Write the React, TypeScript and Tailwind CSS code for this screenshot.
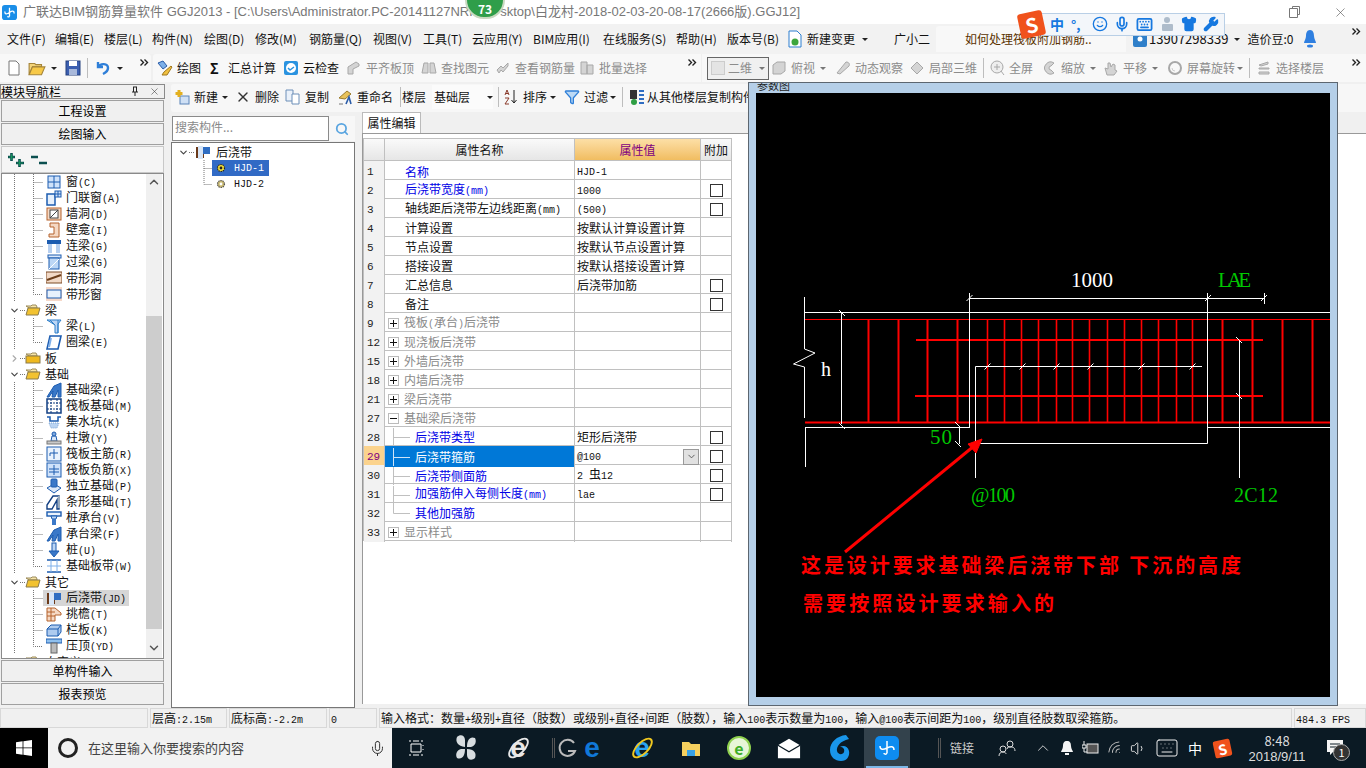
import type { ReactNode } from "react";
import { ChevronDown, ChevronRight, ChevronUp, Filter, Keyboard, Mic, Search, Shirt, Smile, Volume1, Wifi, Wrench, X } from "lucide-react";

// ascii in the grid/tree is half width (SimSun style), so it gets its own smaller mono span
const Sim = ({ text }: { text: string }) => (
  <span className="whitespace-pre">
    {text.split(/([\x20-\x7e]+)/).map((part, i) =>
      /^[\x20-\x7e]+$/.test(part) ? (
        <span key={i} className="font-['Liberation_Mono',monospace] text-[10px]">
          {part}
        </span>
      ) : (
        <span key={i}>{part}</span>
      ),
    )}
  </span>
);

const Ico = ({ children, size = 16, className = "" }: { children: ReactNode; size?: number; className?: string }) => (
  <svg width={size} height={size} viewBox="0 0 16 16" fill="none" className={`shrink-0 ${className}`}>
    {children}
  </svg>
);

const Caret = ({ className = "" }: { className?: string }) => (
  <span className={`inline-block h-0 w-0 shrink-0 border-x-[3px] border-t-[3px] border-x-transparent border-t-[#222] ${className}`} />
);

const More = ({ className = "" }: { className?: string }) => (
  <svg width="9" height="7" viewBox="0 0 9 7" fill="none" stroke="#222" strokeWidth="1.4" className={`shrink-0 ${className}`}>
    <path d="M0.5 0.5L3.5 3.5L0.5 6.5M4.5 0.5L7.5 3.5L4.5 6.5" />
  </svg>
);

const Sep = ({ className = "" }: { className?: string }) => <span className={`h-5 w-px shrink-0 bg-[#bdbdbd] ${className}`} />;

const B = "#1c5cb0";
const O = "#b5622c";
const treeIcons: Record<string, ReactNode> = {
  window: <><rect x="2" y="2" width="12" height="12" fill="#cfe2fa" stroke={B} /><path d="M8 2v12M2 8h12" stroke={B} /></>,
  door: <><rect x="1" y="4" width="8" height="11" fill="#e6f0fc" stroke={B} strokeWidth="1.5" /><rect x="9" y="1" width="6" height="6" fill="#cfe2fa" stroke={B} /><path d="M12 1v6M9 4h6" stroke={B} /></>,
  hole: <><rect x="1" y="2" width="14" height="12" fill="#f5d9c4" stroke={O} /><rect x="4" y="4" width="8" height="8" fill="#fff" stroke="#444" /><path d="M4 12l8-8" stroke="#444" /></>,
  niche: <><path d="M4 1h9v14H3v-3h5V9H8V5H4z" fill="#f5d9c4" stroke={O} /></>,
  lintel: <><rect x="1" y="2" width="14" height="4" fill={B} /><path d="M3 6v9M13 6v9M5 6v9M11 6v9" stroke="#6f9fe0" /></>,
  lintel2: <><rect x="2" y="1" width="13" height="3" fill="#dbe9fb" stroke={B} /><rect x="3" y="4" width="10" height="11" fill="#bcd6f5" stroke={B} /><path d="M3 15L13 5" stroke="#fff" /></>,
  strip: <><rect x="0" y="2" width="16" height="11" fill="#f2d9c6" stroke="#7c4a24" /><path d="M1 10L15 5" stroke="#6d3f1b" strokeWidth="2" /></>,
  stripw: <><rect x="0" y="1" width="16" height="14" fill="#f6d8c8" /><rect x="1" y="4" width="14" height="8" fill="#e8f1fc" stroke={B} /></>,
  beam: <><path d="M1 2h14l-3 4v9H9V7z" fill="#bcd6f5" stroke="#2f7fc9" /><path d="M4 2l5 5M12 2v13" stroke="#2f7fc9" /></>,
  ring: <><path d="M4 2h11l-3 13H1z" fill="#fff" stroke={B} strokeWidth="1.6" /><path d="M5 4l-2 9" stroke="#7fb0ea" strokeWidth="2" /></>,
  fbeam: <><path d="M1 15L8 4l7-3v14h-3V8l-3 7H6l1-6-4 6z" fill="#3a78c8" stroke={B} /></>,
  raft: <><rect x="1" y="1" width="14" height="14" fill="#fff" stroke="#123f82" strokeWidth="1.5" /><path d="M1 5h14M1 11h14M5 1v14M11 1v14" stroke="#123f82" strokeDasharray="2 1" /></>,
  pit: <><path d="M1 3h3v4h8V3h3" stroke={B} strokeWidth="1.5" /><path d="M3 9h10l-2 5H5z" fill="#b9d3f2" stroke="#7fa6d6" strokeDasharray="1 1" /></>,
  pier: <><path d="M6 6h4l1 5H5z" fill="#dce8f8" stroke={B} /><circle cx="8" cy="4" r="2" fill="#7da7dd" stroke={B} /><rect x="1" y="11" width="14" height="3" fill="#c9c9c9" stroke="#777" /></>,
  rebar: <><rect x="1" y="1" width="14" height="14" fill="#eaf3fd" stroke={B} /><path d="M8 3v10M4 7h8M4 7v3" stroke={B} /></>,
  rebar2: <><rect x="1" y="1" width="14" height="14" fill="#cfe2fa" stroke={B} /><path d="M8 3v10M3 7h10M3 10h10" stroke={B} /></>,
  footing: <><path d="M1 10l7-4 7 4-7 5z" fill="#dce8f8" stroke={B} /><rect x="5" y="1" width="6" height="8" rx="1" fill="#3a78c8" stroke={B} /></>,
  sfoot: <><path d="M1 15V11l6-9h6v13h-2V6L6 15z" fill="#fff" stroke="#123f82" strokeWidth="1.4" /><path d="M13 2v12" stroke="#9ab" strokeWidth="2" /></>,
  cap: <><rect x="1" y="2" width="14" height="4" fill="#eaf3fd" stroke={B} strokeWidth="1.4" /><path d="M5 6h6l-1 3H6z" fill="#bcd6f5" stroke={B} /><rect x="6" y="9" width="4" height="6" fill="#3a78c8" /></>,
  pile: <><rect x="6" y="1" width="4" height="9" fill="#bcd6f5" stroke={B} /><path d="M3 9h10l-5 6z" fill="#3a78c8" stroke={B} /></>,
  band: <><path d="M1 2h14M1 14h14" stroke={B} strokeWidth="1.5" /><path d="M5 2v12M11 2v12M1 8h14" stroke="#7fb0ea" /></>,
  post: <><rect x="1" y="3" width="8" height="11" fill="#6b3a1a" /><rect x="3" y="2" width="5" height="13" fill="#d8e6f7" /><rect x="8" y="3" width="7" height="7" fill="#2f6dc2" /></>,
  eave: <><path d="M1 2h8l6 5v2H9v6H1z" fill="#f5d9c4" stroke={O} /><path d="M1 6h8M1 10h8M5 2v13" stroke={O} /></>,
  rail: <><path d="M1 7l4-4h10v7l-3 4H1z" fill="#aecbef" stroke={B} /><path d="M1 7h11v7M12 7l3-4" stroke={B} /></>,
  top: <><rect x="0" y="1" width="16" height="4" fill="#8fc0ee" stroke={B} /><rect x="5" y="5" width="6" height="10" fill="#bbb" stroke="#666" /></>,
};

type Row = { label: string; icon?: string; folder?: "open" | "closed"; last?: boolean; selected?: boolean };

const navRows: Row[] = [
  { label: "窗(C)", icon: "window" },
  { label: "门联窗(A)", icon: "door" },
  { label: "墙洞(D)", icon: "hole" },
  { label: "壁龛(I)", icon: "niche" },
  { label: "连梁(G)", icon: "lintel" },
  { label: "过梁(G)", icon: "lintel2" },
  { label: "带形洞", icon: "strip" },
  { label: "带形窗", icon: "stripw", last: true },
  { label: "梁", folder: "open" },
  { label: "梁(L)", icon: "beam" },
  { label: "圈梁(E)", icon: "ring", last: true },
  { label: "板", folder: "closed" },
  { label: "基础", folder: "open" },
  { label: "基础梁(F)", icon: "fbeam" },
  { label: "筏板基础(M)", icon: "raft" },
  { label: "集水坑(K)", icon: "pit" },
  { label: "柱墩(Y)", icon: "pier" },
  { label: "筏板主筋(R)", icon: "rebar" },
  { label: "筏板负筋(X)", icon: "rebar2" },
  { label: "独立基础(P)", icon: "footing" },
  { label: "条形基础(T)", icon: "sfoot" },
  { label: "桩承台(V)", icon: "cap" },
  { label: "承台梁(F)", icon: "fbeam" },
  { label: "桩(U)", icon: "pile" },
  { label: "基础板带(W)", icon: "band", last: true },
  { label: "其它", folder: "open" },
  { label: "后浇带(JD)", icon: "post", selected: true },
  { label: "挑檐(T)", icon: "eave" },
  { label: "栏板(K)", icon: "rail" },
  { label: "压顶(YD)", icon: "top", last: true },
  { label: "自定义", folder: "closed" },
];

const Folder = ({ open }: { open: boolean }) => (
  <Ico>
    <path d="M1 4h5l1-1h4l1 2v1H4z" fill="#f6e4a8" stroke="#9a8a5a" />
    {open ? <path d="M1 13l2-7h12l-2 7z" fill="#f2c230" stroke="#8a7a4a" /> : <rect x="1" y="6" width="14" height="7" fill="#efb91f" stroke="#8a7a4a" />}
  </Ico>
);

const NavRow = ({ row }: { row: Row }) => {
  if (row.folder) {
    return (
      <div className="flex h-4 items-center pl-[7px]">
        <span className="flex w-[11px] shrink-0 justify-center">
          {row.folder === "open" ? <ChevronDown size={11} strokeWidth={2.5} className="text-[#444]" /> : <ChevronRight size={11} strokeWidth={2.5} className="text-[#aaa]" />}
        </span>
        <svg width="5" height="16" fill="none" className="shrink-0"><path d="M0 8.5h5" stroke="#777" strokeDasharray="1 1" /></svg>
        <Folder open={row.folder === "open"} />
        <span className="ml-[4px] whitespace-nowrap leading-[14px]"><Sim text={row.label} /></span>
      </div>
    );
  }
  return (
    <div className="flex h-4 items-center">
      <svg width="41" height="16" fill="none" className="shrink-0">
        <path d="M12.5 0v16" stroke="#777" strokeDasharray="1 1" />
        <path d={row.last ? "M31.5 0v8.5H44" : "M31.5 0v16M31.5 8.5H44"} stroke="#777" strokeDasharray="1 1" />
      </svg>
      <span className={`flex h-4 items-center pl-[3px] pr-[3px] ${row.selected ? "bg-[#d6d6d6]" : ""}`}>
        <Ico>{treeIcons[row.icon!]}</Ico>
        <span className="ml-[4px] whitespace-nowrap leading-[14px]"><Sim text={row.label} /></span>
      </span>
    </div>
  );
};

const NavButton = ({ label, className = "" }: { label: string; className?: string }) => (
  <div className={`mx-[1px] flex h-[22px] items-center justify-center border border-[#a0a0a0] bg-[#f0f0f0] text-[12px] ${className}`}>{label}</div>
);

const LeftPanel = () => (
  <div className="flex w-[165px] shrink-0 flex-col">
    <div className="flex h-[15px] items-center border border-[#8a8a8a] bg-[#f0f0f0] pr-[4px] text-[12px] leading-none">
      <span>模块导航栏</span>
      <svg width="10" height="11" viewBox="0 0 10 11" className="ml-auto"><path d="M3 1h4M3.5 1v5M6.5 1v5M2 6h6M5 6v4" stroke="#222" /></svg>
      <X size={11} strokeWidth={1.2} className="ml-[9px] text-[#333]" />
    </div>
    <NavButton label="工程设置" className="mt-[1px]" />
    <NavButton label="绘图输入" className="mt-[1px]" />
    <div className="mx-[1px] mt-[1px] flex h-[27px] items-center gap-[5px] border border-[#c8c8c8] bg-[#f5f5f5] pl-[5px]">
      <svg width="18" height="16" viewBox="0 0 18 16"><path d="M4.5 1v8M1 5h7M12.5 7v8M9 11h8" stroke="#0b4f4f" strokeWidth="2.6" /><path d="M4.5 2v6M2 5h5M12.5 8v6M10 11h6" stroke="#17a05d" strokeWidth="0.8" /></svg>
      <svg width="18" height="16" viewBox="0 0 18 16"><path d="M1 5h7M9 11h8" stroke="#0b4f4f" strokeWidth="2.6" /></svg>
    </div>
    <div className="mx-[1px] flex h-[486px] overflow-hidden border border-[#8a8a8a] bg-white text-[12px] text-[#111]">
      <div className="flex-1 overflow-hidden">
        {navRows.map((row) => (
          <NavRow key={row.label + row.icon} row={row} />
        ))}
      </div>
      <div className="mr-[1px] flex w-4 shrink-0 flex-col items-center bg-[#f0f0f0]">
        <ChevronUp size={14} className="mt-[1px] h-[14px] text-[#555]" strokeWidth={2.5} />
        <div className="mt-[127px] h-[313px] w-full bg-[#cdcdcd]" />
        <ChevronDown size={14} className="mt-[12px] text-[#555]" strokeWidth={2.5} />
      </div>
    </div>
    <NavButton label="单构件输入" className="mt-[1px]" />
    <NavButton label="报表预览" className="mt-[1px] h-[21px]" />
  </div>
);

type Prop = {
  n: number;
  label: string;
  kind?: "group" | "open" | "child" | "lastChild";
  value?: string;
  check?: boolean;
  blue?: boolean;
  active?: boolean;
};

const props: Prop[] = [
  { n: 1, label: "名称", value: "HJD-1", blue: true },
  { n: 2, label: "后浇带宽度(mm)", value: "1000", check: true, blue: true },
  { n: 3, label: "轴线距后浇带左边线距离(mm)", value: "(500)", check: true },
  { n: 4, label: "计算设置", value: "按默认计算设置计算" },
  { n: 5, label: "节点设置", value: "按默认节点设置计算" },
  { n: 6, label: "搭接设置", value: "按默认搭接设置计算" },
  { n: 7, label: "汇总信息", value: "后浇带加筋", check: true },
  { n: 8, label: "备注", check: true },
  { n: 9, label: "筏板(承台)后浇带", kind: "group" },
  { n: 12, label: "现浇板后浇带", kind: "group" },
  { n: 15, label: "外墙后浇带", kind: "group" },
  { n: 18, label: "内墙后浇带", kind: "group" },
  { n: 21, label: "梁后浇带", kind: "group" },
  { n: 27, label: "基础梁后浇带", kind: "open" },
  { n: 28, label: "后浇带类型", kind: "child", value: "矩形后浇带", check: true, blue: true },
  { n: 29, label: "后浇带箍筋", kind: "child", value: "@100", check: true, blue: true, active: true },
  { n: 30, label: "后浇带侧面筋", kind: "child", value: "2 虫12", check: true, blue: true },
  { n: 31, label: "加强筋伸入每侧长度(mm)", kind: "child", value: "lae", check: true, blue: true },
  { n: 32, label: "其他加强筋", kind: "lastChild", blue: true },
  { n: 33, label: "显示样式", kind: "group" },
];

const PlusBox = ({ minus }: { minus?: boolean }) => (
  <span className="ml-[3px] mr-[5px] flex h-[11px] w-[11px] shrink-0 items-center justify-center border border-[#bbb] bg-white">
    <svg width="9" height="9"><path d={minus ? "M1 4.5h7" : "M1 4.5h7M4.5 1v7"} stroke="#111" /></svg>
  </span>
);

const PropRow = ({ p }: { p: Prop }) => {
  const isGroup = p.kind === "group" || p.kind === "open";
  const isChild = p.kind === "child" || p.kind === "lastChild";
  return (
    <div className="grid h-[19px] grid-cols-[21px_190px_126px_31px] border-b border-[#c0c0c0] text-[12px] leading-[18px]">
      <div className={`border-r border-[#c0c0c0] pl-[3px] ${p.active ? "bg-[#fbd38d] text-[#800080]" : "bg-[#f2f2f2] text-[#222]"}`}>
        <span className="font-['Liberation_Mono',monospace] text-[11px]">{p.n}</span>
      </div>
      <div className={`flex items-center overflow-hidden border-r border-[#c0c0c0] ${p.active ? "bg-[#0078d7]" : ""}`}>
        {isGroup && <PlusBox minus={p.kind === "open"} />}
        {isChild && (
          <svg width="30" height="18" fill="none" className="shrink-0">
            <path d={p.kind === "lastChild" ? "M8.5 0v9.5H25" : "M8.5 0v18M8.5 9.5H25"} stroke={p.active ? "#cfe3f7" : "#c0c0c0"} />
          </svg>
        )}
        {!isGroup && !isChild && <span className="w-5 shrink-0" />}
        <span className={`whitespace-nowrap ${p.active ? "text-white" : p.blue ? "text-[#0000e6]" : isGroup ? "text-[#8a8a8a]" : "text-[#111]"}`}>
          <Sim text={p.label} />
        </span>
      </div>
      <div className="flex items-center border-r border-[#c0c0c0] pl-[2px] text-[#111]">
        {p.value && <Sim text={p.value} />}
        {p.active && (
          <span className="ml-auto mr-[1px] flex h-[16px] w-[16px] items-center justify-center border border-[#999] bg-[#e1e1e1]">
            <ChevronDown size={11} className="text-[#555]" />
          </span>
        )}
      </div>
      <div className="flex items-center justify-center border-r border-[#c0c0c0]">
        {p.check && <span className="ml-[1px] h-[13px] w-[13px] border border-[#333] bg-white" />}
      </div>
    </div>
  );
};

const PropTable = () => (
  <div className="mt-[4px] w-[369px] border-l border-t border-[#c0c0c0]">
    <div className="grid h-[22px] grid-cols-[21px_190px_126px_31px] border-b border-[#c0c0c0] text-[12px] leading-[21px]">
      <div className="border-r border-[#c0c0c0] bg-gradient-to-b from-[#fafafa] to-[#e6e6e6]" />
      <div className="border-r border-[#c0c0c0] bg-gradient-to-b from-[#fafafa] to-[#e6e6e6] text-center text-[#111]">属性名称</div>
      <div className="border-r border-[#c0c0c0] bg-gradient-to-b from-[#fcdfa6] to-[#f1bd60] text-center text-[#800080]">属性值</div>
      <div className="border-r border-[#c0c0c0] bg-gradient-to-b from-[#fafafa] to-[#e6e6e6] text-center text-[#111]">附加</div>
    </div>
    {props.map((p) => (
      <PropRow key={p.n} p={p} />
    ))}
  </div>
);

const stirrups = [227, 314, 398, 485, 572, 621, 671, 720, 770, 819, 868, 920, 970, 1019, 1068, 1118, 1167, 1254, 1341, 1426, 1513];
const leaderTicks = [572, 672, 770, 870, 1018, 1165];
const zx = (p: number) => Math.round(790 + p / 2.9) + 0.5;

const tick = (x: number, y: number) => `M${x - 3} ${y + 3}L${x + 3} ${y - 3}`;
const backTick = (x: number, y: number) => `M${x - 3} ${y - 3}L${x + 3} ${y + 3}`;

const Drawing = () => (
  <svg viewBox="756 93 574 604" className="h-[604px] w-[574px]" fontFamily="'Liberation Serif', serif">
    <g stroke="#f00" fill="none">
      <path d="M805 319.5H1330" />
      <path d="M805 422.5H1330" strokeWidth="2" />
      <path d="M916 340H1263M915 396H1263" strokeWidth="2" />
      {stirrups.map((p) => (
        <path key={p} d={`M${zx(p)} 320V422`} strokeWidth={p > 500 && p < 1200 ? 1.6 : 2} />
      ))}
    </g>
    <g stroke="#fff" fill="none">
      <path d="M804.5 297V349L815 353L793.5 364L804.5 367V418" />
      <path d="M805.5 427V467" />
      <path d="M804 312.5H1330" />
      <path d="M805 427.5H970M1208 427.5H1330" />
      <path d="M841.5 312V424" />
      <path d={backTick(842, 313)} />
      <path d={backTick(842, 426)} />
      <path d="M969.5 293V428" />
      <path d="M1207.5 293V443.5H976" />
      <path d="M969 298.5H1264" />
      <path d={tick(969.5, 298)} />
      <path d={tick(1208, 298)} />
      <path d={tick(1264, 298)} />
      <path d="M1264.5 293V304" />
      <path d="M975.5 478V366.5H1202" />
      {leaderTicks.map((p) => (
        <path key={p} d={tick(zx(p), 366.5)} />
      ))}
      <path d="M1239.5 340V478" />
      <path d={backTick(1239, 340)} />
      <path d={backTick(1239, 396)} />
      <path d="M959.5 426V444" />
      <path d={backTick(958, 425)} />
      <path d={backTick(958, 444)} />
    </g>
    <path d="M845 552L974 446" stroke="#f00" strokeWidth="3" />
    <path d="M982 439L968 444L976 453Z" fill="#f00" stroke="#f00" />
    <g fontSize="21">
      <text x="1071" y="287" fill="#fff" textLength="42">1000</text>
      <text x="1218" y="287" fill="#00c800" textLength="33">LAE</text>
      <text x="821" y="376" fill="#fff" fontSize="20">h</text>
      <text x="930" y="444" fill="#00c800" textLength="22">50</text>
      <text x="971" y="502" fill="#00c800" fontSize="20" textLength="44">@100</text>
      <text x="1234" y="502" fill="#00c800" fontSize="20" textLength="44">2C12</text>
    </g>
    <g fill="#f00" fontFamily="'Noto Sans CJK SC', sans-serif" fontSize="20" fontWeight="700">
      <text x="801" y="573" textLength="440">这是设计要求基础梁后浇带下部 下沉的高度</text>
      <text x="803" y="611" textLength="251">需要按照设计要求输入的</text>
    </g>
  </svg>
);

const ParamWindow = () => (
  <div className="absolute left-[748px] top-[82px] flex h-[624px] w-[590px] flex-col overflow-hidden border border-[#5c6670] bg-[#b5cfe8]">
    <div className="h-[10px] overflow-hidden pl-[8px] text-[11px] leading-[4px] text-[#222]">参数图</div>
    <div className="mx-auto bg-black">
      <Drawing />
    </div>
  </div>
);

const SogouBar = () => (
  <div className="absolute left-[1019px] top-[12px] flex h-[24px] items-center">
    <span className="z-10 flex h-[25px] w-[25px] -rotate-12 items-center justify-center rounded-[3px] bg-[#f0521c] text-[20px] font-bold leading-none text-white">S</span>
    <div className="-ml-[3px] flex h-[23px] w-[184px] items-center gap-[6px] border border-[#b9cfe6] bg-[#f3f6fa] pl-[8px] text-[#1678e0]">
      <span className="w-[15px] text-[14px] font-bold leading-none">中</span>
      <span className="w-[15px] text-[13px] font-bold leading-none">°,</span>
      <Smile size={16} />
      <Mic size={16} strokeWidth={2.5} />
      <Keyboard size={17} strokeWidth={2.5} />
      <svg width="16" height="16" viewBox="0 0 16 16"><circle cx="8" cy="4" r="3" fill="#aebccb" /><rect x="3" y="8" width="11" height="7" rx="1" fill="#aebccb" /></svg>
      <Shirt size={16} fill="#1678e0" />
      <Wrench size={16} fill="#1678e0" />
    </div>
  </div>
);

const TitleBar = () => (
  <div className="flex h-6 shrink-0 items-center bg-white pl-[2px] text-[13px] text-[#777]">
    <svg width="15" height="15" viewBox="0 0 16 16" className="shrink-0">
      <rect width="16" height="16" rx="3" fill="#1a8ee8" />
      <path d="M8 3v9M3 7c0 3 2 3 5 1s5-2 5 1M8 12c-1 1-2 1-2 0" stroke="#fff" strokeWidth="1.4" fill="none" />
    </svg>
    <span className="ml-[6px] whitespace-nowrap font-['Liberation_Sans','Noto_Sans_CJK_SC',sans-serif]">广联达BIM钢筋算量软件 GGJ2013 - [C:\Users\Administrator.PC-20141127NRHI</span>
    <span className="ml-[18px] whitespace-nowrap font-['Liberation_Sans','Noto_Sans_CJK_SC',sans-serif]">sktop\白龙村-2018-02-03-20-08-17(2666版).GGJ12]</span>
    <svg width="12" height="12" className="ml-auto mr-[32px]"><path d="M3.5 2.5V0.5H10.5V8.5H8.5M0.5 2.5H8.5V11.5H0.5Z" stroke="#777" fill="none" /></svg>
    <X size={15} strokeWidth={1} className="mr-[18px] text-[#555]" />
  </div>
);

const MenuBar = () => (
  <div className="flex h-[30px] shrink-0 items-center bg-[#f2f2f2] text-[12px] text-[#111]">
    <span className="w-[55px] whitespace-nowrap pl-[7px]">文件(F)</span>
    <span className="w-[49px] whitespace-nowrap">编辑(E)</span>
    <span className="w-[48px] whitespace-nowrap">楼层(L)</span>
    <span className="w-[52px] whitespace-nowrap">构件(N)</span>
    <span className="w-[51px] whitespace-nowrap">绘图(D)</span>
    <span className="w-[54px] whitespace-nowrap">修改(M)</span>
    <span className="w-[64px] whitespace-nowrap">钢筋量(Q)</span>
    <span className="w-[50px] whitespace-nowrap">视图(V)</span>
    <span className="w-[49px] whitespace-nowrap">工具(T)</span>
    <span className="w-[61px] whitespace-nowrap">云应用(Y)</span>
    <span className="w-[70px] whitespace-nowrap">BIM应用(I)</span>
    <span className="w-[73px] whitespace-nowrap">在线服务(S)</span>
    <span className="w-[51px] whitespace-nowrap">帮助(H)</span>
    <span className="w-[60px] whitespace-nowrap">版本号(B)</span>
    <svg width="16" height="18" viewBox="0 0 16 18" className="shrink-0"><path d="M2 1h8l4 4v12H2z" fill="#fff" stroke="#2c7fd0" /><circle cx="8" cy="12" r="3.5" fill="#3da63d" /></svg>
    <span className="ml-[4px] whitespace-nowrap">新建变更</span>
    <Caret className="ml-[7px]" />
    <span className="ml-[26px] whitespace-nowrap">广小二</span>
    <div className="ml-[6px] flex h-[26px] w-[190px] shrink-0 items-center rounded-t-[3px] bg-[#f8f8f8] pl-[29px] text-[#5a3200]">如何处理筏板附加钢筋..</div>
    <svg width="14" height="15" viewBox="0 0 14 15" className="ml-[7px] shrink-0"><rect y="2" width="14" height="13" rx="2" fill="#2f7fc9" /><circle cx="7" cy="7" r="2.5" fill="#fff" /></svg>
    <span className="ml-[2px] whitespace-nowrap text-[13px]">13907298339</span>
    <Caret className="ml-[6px]" />
    <span className="ml-[7px] whitespace-nowrap">造价豆:0</span>
    <svg width="14" height="20" viewBox="0 0 14 20" className="ml-[10px] shrink-0"><path d="M7 1c3 0 4 3 4 6s2 5 2 7H1c0-2 2-4 2-7s1-6 4-6z" fill="#2f7fe0" /><ellipse cx="7" cy="17" rx="3" ry="1.5" fill="#2f7fe0" /></svg>
    <More className="ml-auto mr-[5px] -mt-[16px]" />
  </div>
);

const Tool = ({ icon, label, gray, className = "" }: { icon?: ReactNode; label: string; gray?: boolean; className?: string }) => (
  <span className={`flex shrink-0 items-center whitespace-nowrap ${gray ? "text-[#8c8c8c]" : "text-[#111]"} ${className}`}>
    {icon}
    <span className="ml-[4px]">{label}</span>
  </span>
);

const GrayIco = ({ d }: { d: string }) => (
  <Ico>
    <path d={d} fill="#d4d4d4" stroke="#a8a8a8" />
  </Ico>
);

const ToolBar = () => (
  <div className="flex h-7 shrink-0 items-center bg-[#f0f0f0] text-[12px]">
    <div className="flex h-full w-[151px] shrink-0 items-center rounded-r-[3px] bg-[#f8f8f8] pl-[6px]">
      <Ico><path d="M3 1h7l3 3v11H3z" fill="#fff" stroke="#777" /></Ico>
      <Ico className="ml-[6px]" size={18}><path d="M1 4h5l1 1h5v2H4l-3 7z" fill="#f4d47a" stroke="#a5853a" /><path d="M1 14l3-7h11l-3 7z" fill="#f7c948" stroke="#a5853a" /></Ico>
      <Caret className="ml-[5px]" />
      <Ico className="ml-[8px]"><rect x="1" y="1" width="14" height="14" fill="#3c5fb0" stroke="#24407f" /><rect x="4" y="1" width="8" height="5" fill="#fff" /><rect x="4" y="9" width="8" height="6" fill="#a8b8da" /></Ico>
      <Sep className="ml-[6px]" />
      <Ico className="ml-[7px]"><path d="M3 2v5h5M3.5 7C5 3 13 3 13 8c0 3-3 5-5 6" stroke="#2f7fd8" strokeWidth="2.4" /></Ico>
      <Caret className="ml-[6px]" />
      <More className="ml-[17px] -mt-[12px]" />
    </div>
    <div className="ml-[2px] flex h-full w-[548px] shrink-0 items-center rounded-l-[3px] bg-[#f8f8f8] pl-[4px]">
      <Tool label="绘图" icon={<Ico><path d="M1 3l5-2 4 5-4 3z" fill="#7db0e8" stroke="#2a5ca8" /><path d="M7 12l7-6 1 1-5 8-5 0z" fill="#f0c040" stroke="#a07820" /></Ico>} />
      <span className="ml-[9px] w-[14px] shrink-0 text-[14px] font-bold leading-none text-[#111]">Σ</span>
      <Tool label="汇总计算" />
      <Tool label="云检查" className="ml-[7px]" icon={<Ico><rect x="1" y="1" width="14" height="14" rx="2" fill="#2a93e0" /><circle cx="8" cy="8" r="5" fill="#fff" /><path d="M5 8l2 2 4-3" stroke="#2a93e0" strokeWidth="1.5" /></Ico>} />
      <Tool label="平齐板顶" gray className="ml-[7px]" icon={<GrayIco d="M2 14V7l8-5 3 2v2L7 9v5z" />} />
      <Tool label="查找图元" gray className="ml-[7px]" icon={<GrayIco d="M3 3h4v10H1zM9 3h4l2 10H9z" />} />
      <Tool label="查看钢筋量" gray className="ml-[6px]" icon={<GrayIco d="M2 10l4-4 2 2 5-5v3L8 12 6 10l-2 3z" />} />
      <Tool label="批量选择" gray className="ml-[4px]" icon={<GrayIco d="M2 2h6v12H2zM8 5h6v9H8z" />} />
      <More className="ml-[41px] -mt-[12px]" />
    </div>
    <div className="ml-[1px] flex h-full min-w-0 flex-1 items-center bg-[#f8f8f8] pl-[5px]">
      <span className="flex h-[23px] w-[62px] shrink-0 items-center border border-[#666] bg-[#f0f0f0] pl-[3px] text-[#8c8c8c]">
        <span className="h-[14px] w-[14px] border border-[#ccc] bg-[#e4e4e4]" />
        <span className="ml-[3px]">二维</span>
        <Caret className="ml-[7px] border-t-[#777]" />
      </span>
      <Tool label="俯视" gray className="ml-[2px]" icon={<GrayIco d="M2 5l4-3h8v9l-4 3H2z" />} />
      <Caret className="ml-[5px] border-t-[#777]" />
      <Tool label="动态观察" gray className="ml-[9px]" icon={<GrayIco d="M2 13L11 2c3 0 4 2 3 4L5 14z" />} />
      <Tool label="局部三维" gray className="ml-[6px]" icon={<GrayIco d="M2 8l6-6 6 6-6 6z" />} />
      <Sep className="ml-[6px]" />
      <Tool label="全屏" gray className="ml-[5px]" icon={<Ico><circle cx="8" cy="7" r="6" fill="#eee" stroke="#a8a8a8" /><path d="M8 4v6M5 7h6M12 11l3 4" stroke="#a8a8a8" /></Ico>} />
      <Tool label="缩放" gray className="ml-[8px]" icon={<GrayIco d="M13 3A6 6 0 1 0 13 13L10 10A2 2 0 1 1 10 6z" />} />
      <Caret className="ml-[5px] border-t-[#777]" />
      <Tool label="平移" gray className="ml-[7px]" icon={<GrayIco d="M4 15L2 8l3 1V3h2l1 4 2-3 2 1v5l2 1-3 4z" />} />
      <Caret className="ml-[5px] border-t-[#777]" />
      <Tool label="屏幕旋转" gray className="ml-[9px]" icon={<Ico><circle cx="8" cy="8" r="6" stroke="#a8a8a8" strokeWidth="2" /><path d="M8 11a3 3 0 0 1-3-3" stroke="#ccc" /></Ico>} />
      <Caret className="ml-[2px] border-t-[#777]" />
      <Sep className="ml-[6px]" />
      <Tool label="选择楼层" gray className="ml-[6px]" icon={<GrayIco d="M3 5l9-3v2L5 6zM3 8h10v1H3zM3 12h10v2H3z" />} />
      <More className="ml-auto mr-[5px] -mt-[12px]" />
    </div>
  </div>
);

const SubToolBar = () => (
  <div className="flex h-7 shrink-0 items-center rounded-l-[3px] bg-[#f7f7f7] pb-[2px] pl-[3px] text-[12px] text-[#111]">
    <Tool label="新建" icon={<Ico><rect x="6" y="7" width="9" height="8" fill="#cfe0f5" stroke="#5b84b8" /><path d="M5 1v7M1.5 4.5h7" stroke="#e3b020" strokeWidth="3" /></Ico>} />
    <Caret className="ml-[4px]" />
    <X size={16} strokeWidth={2} className="ml-[7px] text-[#333]" />
    <span className="ml-[4px] whitespace-nowrap">删除</span>
    <Tool label="复制" className="ml-[6px]" icon={<Ico><path d="M1 1h7v11H1z" fill="#eaf1fa" stroke="#6d8fb8" /><path d="M7 5h7v10H7z" fill="#fff" stroke="#6d8fb8" /></Ico>} />
    <Tool label="重命名" className="ml-[8px]" icon={<Ico><path d="M2 9l8-7 4 3-6 5z" fill="#e8c25a" stroke="#9a7a2a" /><path d="M9 15l3-7 2 7" stroke="#2a5ca8" strokeWidth="1.6" /><path d="M2 15h4" stroke="#777" /></Ico>} />
    <Sep className="ml-[7px]" />
    <span className="ml-[1px] whitespace-nowrap">楼层</span>
    <span className="ml-[6px] flex h-[24px] w-[61px] shrink-0 items-center bg-[#fbfbfb] pl-[2px]">
      基础层
      <Caret className="ml-[17px]" />
    </span>
    <Sep className="ml-[5px]" />
    <Ico className="ml-[5px]"><path d="M1 6l2-5 2 5M1.5 4.5h3M1 9h4l-4 6h4" stroke="#8a3a2a" /><path d="M10 1v13M7.5 11l2.5 3 2.5-3" stroke="#222" /></Ico>
    <span className="ml-[3px] whitespace-nowrap">排序</span>
    <Caret className="ml-[3px]" />
    <Filter size={16} className="ml-[8px] text-[#2f7fd8]" fill="#bcd9f5" />
    <span className="ml-[4px] whitespace-nowrap">过滤</span>
    <Caret className="ml-[2px]" />
    <Sep className="ml-[6px]" />
    <Ico className="ml-[6px]"><rect x="1" y="1" width="7" height="9" fill="#333" /><circle cx="5" cy="13" r="3" fill="#2f9e44" /><path d="M10 2h5M10 6h5M10 10h5M10 14h5" stroke="#2f6dc2" strokeWidth="2" /></Ico>
    <span className="ml-[2px] whitespace-nowrap">从其他楼层复制构件</span>
  </div>
);

const Gear = ({ dark }: { dark?: boolean }) => (
  <svg width="12" height="12" viewBox="0 0 12 12" className="shrink-0">
    <circle cx="6" cy="6" r="3.5" fill={dark ? "#c8b870" : "#f6e23a"} stroke={dark ? "#555" : "#222"} strokeWidth="1.2" strokeDasharray="1.4 0.8" />
    <circle cx="6" cy="6" r="1.4" fill={dark ? "#fff" : "#222"} />
  </svg>
);

const ComponentTree = () => (
  <div className="flex w-[184px] shrink-0 flex-col">
    <div className="mt-[4px] flex h-[25px] items-stretch">
      <div className="ml-[1px] flex w-[157px] items-center border border-[#8a8a8a] bg-white pb-[3px] pl-[2px] text-[12px] text-[#8a8a8a]">搜索构件...</div>
      <div className="flex flex-1 items-center justify-center bg-[#f7f7f7]">
        <Search size={14} strokeWidth={3} className="text-[#5aa5e0]" />
      </div>
    </div>
    <div className="mt-[1px] flex-1 border border-[#777] bg-white pt-[1px] text-[12px] text-[#111]">
      <div className="flex h-4 items-center pl-[6px]">
        <ChevronDown size={11} strokeWidth={2.5} className="text-[#444]" />
        <svg width="6" height="16" fill="none"><path d="M0 8.5h6" stroke="#777" strokeDasharray="1 1" /></svg>
        <Ico>{treeIcons.post}</Ico>
        <span className="ml-[5px]">后浇带</span>
      </div>
      <div className="flex h-4 items-center pl-[31px]">
        <svg width="9" height="16" fill="none"><path d="M1 0v8.5H9M1 8v8" stroke="#777" strokeDasharray="1 1" /></svg>
        <span className="flex h-4 w-[57px] items-center bg-[#316ac5] pl-[3px] text-white">
          <Gear />
          <span className="ml-[7px] font-['Liberation_Mono',monospace] text-[10px]">HJD-1</span>
        </span>
      </div>
      <div className="flex h-4 items-center pl-[31px]">
        <svg width="9" height="16" fill="none"><path d="M1 0v8.5H9" stroke="#777" strokeDasharray="1 1" /></svg>
        <span className="flex h-4 items-center pl-[3px]">
          <Gear dark />
          <span className="ml-[7px] font-['Liberation_Mono',monospace] text-[10px]">HJD-2</span>
        </span>
      </div>
    </div>
  </div>
);

const StatusBar = () => (
  <div className="flex h-5 shrink-0 gap-[2px] bg-[#f0f0f0] text-[12px] text-[#111]">
    <span className="w-[148px] border border-[#d8d8d8]" />
    <span className="w-[77px] whitespace-nowrap border border-[#d8d8d8] pl-[1px] leading-[18px]"><Sim text="层高:2.15m" /></span>
    <span className="w-[98px] whitespace-nowrap border border-[#d8d8d8] pl-[1px] leading-[18px]"><Sim text="底标高:-2.2m" /></span>
    <span className="w-[48px] border border-[#d8d8d8] pl-[1px] leading-[18px]"><Sim text="0" /></span>
    <span className="w-[913px] overflow-hidden whitespace-nowrap border border-[#d8d8d8] pl-[1px] leading-[18px]">
      <Sim text="输入格式：数量+级别+直径（肢数）或级别+直径+间距（肢数），输入100表示数量为100，输入@100表示间距为100，级别直径肢数取梁箍筋。" />
    </span>
    <span className="flex-1 whitespace-nowrap border border-[#d8d8d8] pl-[1px] leading-[18px]"><Sim text="484.3 FPS" /></span>
  </div>
);

const TaskApp = ({ children, active, open, className = "" }: { children: ReactNode; active?: boolean; open?: boolean; className?: string }) => (
  <span className={`relative flex h-full shrink-0 items-center justify-center ${active ? "bg-[#33424c]" : ""} ${className}`}>
    {children}
    {open && <span className="absolute bottom-0 left-[2px] right-[2px] h-[2px] bg-[#7db8e8]" />}
  </span>
);

const EIcon = ({ color, ring }: { color: string; ring?: string }) => (
  <span className="relative flex h-6 w-6 items-center justify-center">
    <span className="font-['Liberation_Sans',sans-serif] text-[28px] font-bold leading-none" style={{ color }}>e</span>
    {ring && <span className="absolute h-[26px] w-[13px] rotate-45 rounded-[50%] border-2" style={{ borderColor: ring }} />}
  </span>
);

const TaskBar = () => (
  <div className="flex h-10 shrink-0 items-center bg-[#0b1a24] text-white">
    <span className="flex h-full w-12 shrink-0 items-center justify-center bg-black">
      <svg width="16" height="16" viewBox="0 0 16 16"><path d="M0 2.2L6.6 1.3V7.5H0ZM7.4 1.2L16 0V7.5H7.4ZM0 8.3H6.6V14.7L0 13.8ZM7.4 8.3H16V16L7.4 14.8Z" fill="#fff" /></svg>
    </span>
    <div className="flex h-full w-[344px] shrink-0 items-center bg-[#f2f2f2] pl-[10px] text-[13px] text-[#444]">
      <span className="h-[20px] w-[20px] rounded-full border-[3px] border-[#222]" />
      <span className="ml-[10px]">在这里输入你要搜索的内容</span>
      <Mic size={17} strokeWidth={1.4} className="ml-[125px] text-[#333]" />
    </div>
    <TaskApp className="ml-[15px] w-[18px]">
      <svg width="16" height="16" viewBox="0 0 16 16"><path d="M1 1h2M5 1h6M13 1h2M1 15h2M5 15h6M13 15h2M3 4h10v8H3zM15 5v1M15 9v1" stroke="#fff" fill="none" /></svg>
    </TaskApp>
    <TaskApp className="ml-[29px] w-[24px]">
      <svg width="22" height="28" viewBox="0 0 22 28"><path d="M10 13C3 12 0 8 2 3c3-3 8-2 8 3zM12 13c0-7 3-11 8-9 2 4 0 8-4 9zM12 15c7 0 10 4 8 9-3 3-8 2-8-3zM10 15c0 7-3 11-8 9-2-4 0-8 4-9z" fill="#d8dde0" /></svg>
    </TaskApp>
    <TaskApp className="ml-[28px] w-6"><EIcon color="#e8e8e8" ring="#e8e8e8" /></TaskApp>
    <span className="ml-[22px] h-5 w-[3px] shrink-0 border-x border-[#555]" />
    <TaskApp className="w-6">
      <svg width="20" height="22" viewBox="0 0 20 22"><path d="M17 6a8 8 0 1 0 1 8h-7" stroke="#bbb" strokeWidth="2" fill="none" /></svg>
    </TaskApp>
    <TaskApp className="ml-[1px] w-6"><EIcon color="#1078d8" /></TaskApp>
    <TaskApp className="ml-[26px] w-6"><EIcon color="#2aa3f0" ring="#f0c820" /></TaskApp>
    <TaskApp className="ml-[25px] w-6">
      <svg width="20" height="18" viewBox="0 0 20 18"><path d="M1 3h7l2 2h9v12H1z" fill="#f5cf5e" /><path d="M6 17v-6h8v6" fill="#37a0e6" /></svg>
    </TaskApp>
    <TaskApp className="ml-[24px] w-6">
      <span className="flex h-[24px] w-[24px] items-center justify-center rounded-full border-2 border-[#8fd14f] bg-[#e8f6d8] font-bold leading-none text-[#3fae29]">e</span>
    </TaskApp>
    <TaskApp className="ml-[26px] w-6">
      <svg width="26" height="22" viewBox="0 0 26 22"><path d="M1 8L13 1l12 7v14H1z" fill="#fff" /><path d="M1 8l12 7 12-7" stroke="#0b1a24" strokeWidth="1.4" fill="none" /></svg>
    </TaskApp>
    <TaskApp className="ml-[27px] w-6">
      <svg width="24" height="30" viewBox="0 0 24 30"><path d="M18 2C9 3 2 9 2 17c0 7 5 11 11 11s9-5 8-10-6-6-9-4c3 0 5 2 4 5s-6 3-7-1 3-10 12-12z" fill="#1996ea" /></svg>
    </TaskApp>
    <TaskApp active open className="ml-[12px] w-[46px]">
      <span className="flex h-6 w-6 items-center justify-center rounded-[5px] bg-[#0e8cf0]">
        <svg width="16" height="16" viewBox="0 0 16 16" fill="none"><path d="M8 1v12M1 6c0 4 3 4 7 2s7-2 7 2M8 13c-1 2-3 1-3 0" stroke="#fff" strokeWidth="1.5" /></svg>
      </span>
    </TaskApp>
    <span className="ml-[28px] h-5 w-[3px] shrink-0 border-x border-[#555]" />
    <span className="ml-[9px] whitespace-nowrap text-[12px] text-[#ccc]">链接</span>
    <svg width="18" height="18" viewBox="0 0 18 18" fill="none" stroke="#ddd" className="ml-[24px] shrink-0"><circle cx="5" cy="10" r="3" /><path d="M1 17c0-3 2-4 4-4s3 1 3 2" /><circle cx="12" cy="5" r="3" /><path d="M9 10l1-2h4c2 0 3 2 3 4" /></svg>
    <ChevronUp size={18} strokeWidth={1.2} className="ml-[18px] text-[#ddd]" />
    <svg width="14" height="16" viewBox="0 0 14 16" className="ml-[8px] shrink-0"><path d="M7 1c3 0 4 2 4 5s2 5 2 6H1c0-1 2-3 2-6s1-5 4-5z" fill="#f5f5f5" /><path d="M5 14h4" stroke="#f5f5f5" strokeWidth="2" /></svg>
    <svg width="17" height="14" viewBox="0 0 17 14" className="ml-[8px] shrink-0" fill="none" stroke="#eee"><rect x="5" y="3" width="11" height="9" fill="#555" /><path d="M2 0v4M0 4h4v3H0zM2 7v4h3" /></svg>
    <Wifi size={17} strokeWidth={1.4} className="ml-[8px] -rotate-45 text-[#bbb]" />
    <Volume1 size={17} strokeWidth={1.4} className="ml-[6px] text-[#ddd]" />
    <Keyboard size={24} strokeWidth={1} className="ml-[8px] text-[#eee]" />
    <span className="ml-[9px] w-[14px] text-[14px] leading-none text-white">中</span>
    <span className="ml-[12px] flex h-[17px] w-[17px] -rotate-12 items-center justify-center rounded-[2px] bg-[#f0521c] text-[14px] font-bold leading-none">S</span>
    <div className="ml-[13px] flex w-[66px] shrink-0 flex-col items-center gap-[3px] text-[13px] leading-none text-[#ddd]">
      <span>8:48</span>
      <span className="font-['Liberation_Sans',sans-serif]">2018/9/11</span>
    </div>
    <span className="relative ml-[16px] flex w-6 shrink-0">
      <svg width="18" height="18" viewBox="0 0 18 18"><path d="M1 1h16v12H7l-3 3v-3H1z" fill="#f5f5f5" /><path d="M4 5h10M4 8h10" stroke="#0b1a24" /></svg>
      <span className="absolute left-[7px] top-[5px] flex h-[17px] w-[17px] items-center justify-center rounded-full border border-[#aaa] bg-[#333] text-[11px] leading-none">1</span>
    </span>
  </div>
);

const Badge = () => (
  <div className="absolute left-[465px] top-[-19px] flex h-[38px] w-[40px] items-end justify-center rounded-full border-2 border-[#c9d9c0] bg-[#2f9e4a] pb-[1px] text-[12px] font-bold leading-[14px] text-white">
    73
  </div>
);

export default function App() {
  return (
    <div className="relative flex h-[768px] w-[1366px] flex-col overflow-hidden bg-[#f0f0f0] font-['Noto_Sans_CJK_SC',sans-serif]">
      <TitleBar />
      <MenuBar />
      <ToolBar />
      <div className="flex h-[626px] shrink-0 pt-[2px]">
        <LeftPanel />
        <div className="ml-[6px] flex min-w-0 flex-1 flex-col">
          <SubToolBar />
          <div className="flex min-h-0 flex-1">
            <ComponentTree />
            <div className="ml-[7px] flex min-w-0 flex-1 flex-col pb-[4px]">
              <div className="flex h-[21px] shrink-0">
                <span className="flex w-[59px] items-center justify-center border-x border-t border-[#bbb] bg-white text-[12px] text-[#111]">属性编辑</span>
              </div>
              <div className="flex-1 border-l border-t border-[#999] bg-white">
                <PropTable />
              </div>
            </div>
          </div>
        </div>
      </div>
      <StatusBar />
      <TaskBar />
      <Badge />
      <ParamWindow />
      <SogouBar />
    </div>
  );
}
